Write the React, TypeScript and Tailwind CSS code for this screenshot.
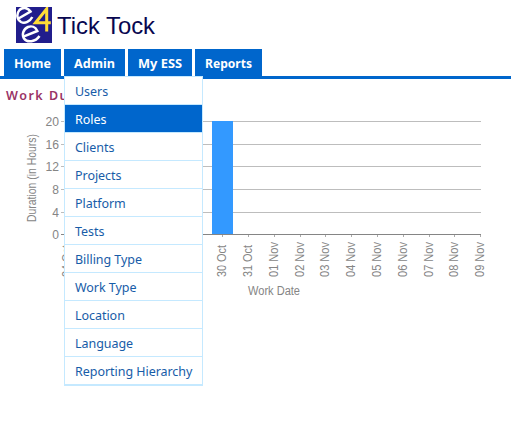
const tabs = [
  { label: 'Home', box: 'w-[57px]', len: 37 },
  { label: 'Admin', box: 'w-[61px]', len: 41 },
  { label: 'My ESS', box: 'w-[64px]', len: 44 },
  { label: 'Reports', box: 'w-[67px]', len: 47 },
];

const items = [
  'Users', 'Roles', 'Clients', 'Projects', 'Platform', 'Tests',
  'Billing Type', 'Work Type', 'Location', 'Language', 'Reporting Hierarchy',
];

const dates = [
  '24 Oct', '25 Oct', '26 Oct', '27 Oct', '28 Oct', '29 Oct', '30 Oct', '31 Oct',
  '01 Nov', '02 Nov', '03 Nov', '04 Nov', '05 Nov', '06 Nov', '07 Nov', '08 Nov', '09 Nov',
];

const levels = [
  { value: 20, y: 15 }, { value: 16, y: 38 }, { value: 12, y: 60 },
  { value: 8, y: 83 }, { value: 4, y: 106 }, { value: 0, y: 128 },
];

function Logo() {
  return (
    <svg width="36" height="36" viewBox="0 0 36 36" className="shrink-0" role="img" aria-label="e4e">
      <rect width="36" height="36" fill="#211d8c" />
      <g fill="none" stroke="#fff" strokeWidth="2.5">
        <path d="M2.5 11.5 L14.5 4.5 C11.5 0 6.5 0 3.5 3 C0 7 1 12.8 5 15 C9 17 14 14.5 16.3 10" />
        <path d="M8 29.3 L21.3 24 C19.5 19.7 15.5 18.6 12 20 C7.3 22 5.6 27.5 8 31.5 C11.2 36 19.5 35 23.5 29" />
      </g>
      <path d="M30.7 24.5 V1.8 L19.5 15.8 H34.8" fill="none" stroke="#ffdc37" strokeWidth="3" />
    </svg>
  );
}

function Chart() {
  return (
    <svg width="511" height="200" viewBox="0 0 511 200" className="block font-['Liberation_Sans',sans-serif] text-[12px]" fill="#858585">
      {levels.map(({ value, y }) => (
        <g key={value}>
          <rect x="61" y={y} width="420" height="1" fill={value ? '#bdbdbd' : '#858585'} />
          <text x="59" y={y + 5} textAnchor="end" fontSize="13.5" textLength={value > 9 ? 13.5 : 6.7} lengthAdjust="spacingAndGlyphs">{value}</text>
        </g>
      ))}
      <rect x="212" y="15" width="21" height="113" fill="#3399ff" />
      {dates.map((date, i) => {
        const x = Math.round(67.3 + i * 25.8);
        return (
          <g key={date}>
            <rect x={x} y="129" width="1" height="2" fill="#aaa" />
            <text transform={`translate(${x + 4} 171) rotate(-90)`} textLength={date.endsWith('Oct') ? 32 : 35} lengthAdjust="spacingAndGlyphs">{date}</text>
          </g>
        );
      })}
      <text transform="translate(36 116) rotate(-90)" textLength="88" lengthAdjust="spacingAndGlyphs">Duration (in Hours)</text>
      <text x="248" y="189" textLength="52" lengthAdjust="spacingAndGlyphs">Work Date</text>
    </svg>
  );
}

export default function App() {
  return (
    <div className="h-[428px] w-[511px] overflow-hidden bg-white font-['Noto_Sans',sans-serif]">
      <header className="flex h-[49px] gap-1 pt-[7px] pl-4">
        <Logo />
        <svg width="110" height="36" className="font-['Liberation_Sans',sans-serif]" role="heading">
          <text x="1" y="27" fontSize="24" fill="#080750" textLength="98" lengthAdjust="spacingAndGlyphs">Tick Tock</text>
        </svg>
      </header>
      <nav className="flex h-[30px] gap-[3px] border-b-[3px] border-[#0066cc] pl-1">
        {tabs.map(({ label, box, len }) => (
          <div key={label} className={`relative h-[27px] bg-[#0066cc] ${box}`}>
            <svg width="100%" height="27" className="block">
              <text x="10" y="19" fontSize="13" fontWeight="700" fill="#fff" textLength={len} lengthAdjust="spacingAndGlyphs">{label}</text>
            </svg>
            {label === 'Admin' && (
              <ul className="absolute top-[27px] left-0 z-10 w-[139px] border border-b-2 border-[#c5e9ff] bg-white text-[12.5px] tracking-[-0.04px] text-[#175ca8]">
                {items.map((item) => (
                  <li
                    key={item}
                    className={`h-7 border-b border-[#c5e9ff] pl-[10px] leading-[29px] whitespace-nowrap last:h-[27px] last:border-b-0 ${item === 'Roles' ? 'bg-[#0066cc] text-white' : ''}`}
                  >
                    {item}
                  </li>
                ))}
              </ul>
            )}
          </div>
        ))}
      </nav>
      <main>
        <h1 className="h-[27px] pt-[6px] pl-[6px] text-[12.5px] leading-[21px] font-semibold tracking-[1.5px] whitespace-nowrap text-[#993366]">Work Du</h1>
        <Chart />
      </main>
    </div>
  );
}
